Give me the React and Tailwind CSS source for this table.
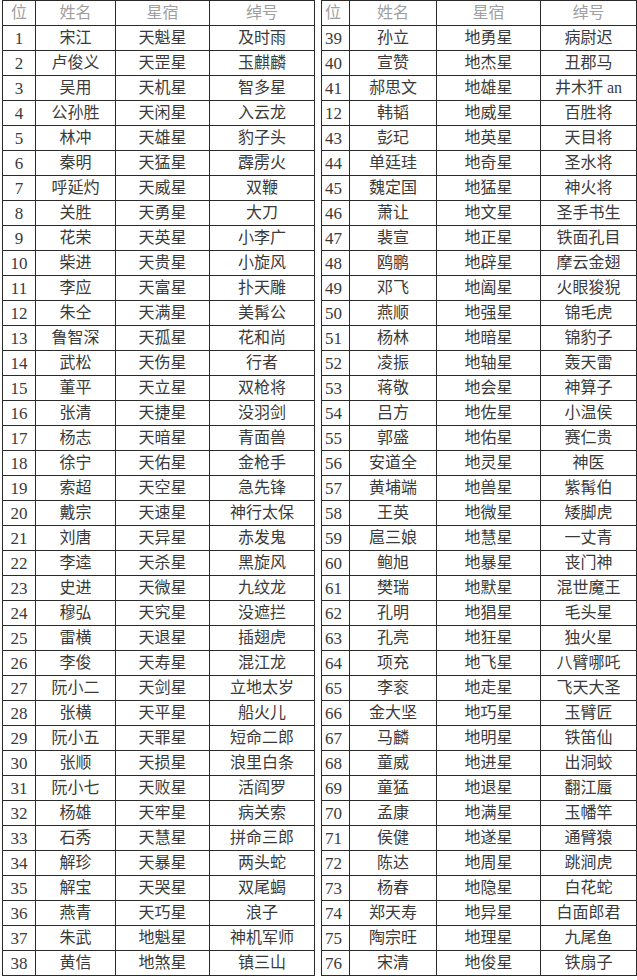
import React from 'react';

const left = [
  ['1', '宋江', '天魁星', '及时雨'],
  ['2', '卢俊义', '天罡星', '玉麒麟'],
  ['3', '吴用', '天机星', '智多星'],
  ['4', '公孙胜', '天闲星', '入云龙'],
  ['5', '林冲', '天雄星', '豹子头'],
  ['6', '秦明', '天猛星', '霹雳火'],
  ['7', '呼延灼', '天威星', '双鞭'],
  ['8', '关胜', '天勇星', '大刀'],
  ['9', '花荣', '天英星', '小李广'],
  ['10', '柴进', '天贵星', '小旋风'],
  ['11', '李应', '天富星', '扑天雕'],
  ['12', '朱仝', '天满星', '美髯公'],
  ['13', '鲁智深', '天孤星', '花和尚'],
  ['14', '武松', '天伤星', '行者'],
  ['15', '董平', '天立星', '双枪将'],
  ['16', '张清', '天捷星', '没羽剑'],
  ['17', '杨志', '天暗星', '青面兽'],
  ['18', '徐宁', '天佑星', '金枪手'],
  ['19', '索超', '天空星', '急先锋'],
  ['20', '戴宗', '天速星', '神行太保'],
  ['21', '刘唐', '天异星', '赤发鬼'],
  ['22', '李逵', '天杀星', '黑旋风'],
  ['23', '史进', '天微星', '九纹龙'],
  ['24', '穆弘', '天究星', '没遮拦'],
  ['25', '雷横', '天退星', '插翅虎'],
  ['26', '李俊', '天寿星', '混江龙'],
  ['27', '阮小二', '天剑星', '立地太岁'],
  ['28', '张横', '天平星', '船火儿'],
  ['29', '阮小五', '天罪星', '短命二郎'],
  ['30', '张顺', '天损星', '浪里白条'],
  ['31', '阮小七', '天败星', '活阎罗'],
  ['32', '杨雄', '天牢星', '病关索'],
  ['33', '石秀', '天慧星', '拼命三郎'],
  ['34', '解珍', '天暴星', '两头蛇'],
  ['35', '解宝', '天哭星', '双尾蝎'],
  ['36', '燕青', '天巧星', '浪子'],
  ['37', '朱武', '地魁星', '神机军师'],
  ['38', '黄信', '地煞星', '镇三山'],
];

const right = [
  ['39', '孙立', '地勇星', '病尉迟'],
  ['40', '宣赞', '地杰星', '丑郡马'],
  ['41', '郝思文', '地雄星', '井木犴 an'],
  ['12', '韩韬', '地威星', '百胜将'],
  ['43', '彭玘', '地英星', '天目将'],
  ['44', '单廷珪', '地奇星', '圣水将'],
  ['45', '魏定国', '地猛星', '神火将'],
  ['46', '萧让', '地文星', '圣手书生'],
  ['47', '裴宣', '地正星', '铁面孔目'],
  ['48', '鸥鹏', '地辟星', '摩云金翅'],
  ['49', '邓飞', '地阖星', '火眼狻猊'],
  ['50', '燕顺', '地强星', '锦毛虎'],
  ['51', '杨林', '地暗星', '锦豹子'],
  ['52', '凌振', '地轴星', '轰天雷'],
  ['53', '蒋敬', '地会星', '神算子'],
  ['54', '吕方', '地佐星', '小温侯'],
  ['55', '郭盛', '地佑星', '赛仁贵'],
  ['56', '安道全', '地灵星', '神医'],
  ['57', '黄埔端', '地兽星', '紫髯伯'],
  ['58', '王英', '地微星', '矮脚虎'],
  ['59', '扈三娘', '地慧星', '一丈青'],
  ['60', '鲍旭', '地暴星', '丧门神'],
  ['61', '樊瑞', '地默星', '混世魔王'],
  ['62', '孔明', '地猖星', '毛头星'],
  ['63', '孔亮', '地狂星', '独火星'],
  ['64', '项充', '地飞星', '八臂哪吒'],
  ['65', '李衮', '地走星', '飞天大圣'],
  ['66', '金大坚', '地巧星', '玉臂匠'],
  ['67', '马麟', '地明星', '铁笛仙'],
  ['68', '童威', '地进星', '出洞蛟'],
  ['69', '童猛', '地退星', '翻江蜃'],
  ['70', '孟康', '地满星', '玉幡竿'],
  ['71', '侯健', '地遂星', '通臂猿'],
  ['72', '陈达', '地周星', '跳涧虎'],
  ['73', '杨春', '地隐星', '白花蛇'],
  ['74', '郑天寿', '地异星', '白面郎君'],
  ['75', '陶宗旺', '地理星', '九尾鱼'],
  ['76', '宋清', '地俊星', '铁扇子'],
];

function HeroTable({ rows, widths, numClass }) {
  return (
    <table className="table-fixed border-collapse text-[16px] leading-none text-[#3a3a3a]">
      <colgroup>
        {widths.map((w, i) => (
          <col key={i} style={{ width: w }} />
        ))}
      </colgroup>
      <thead>
        <tr className="h-[25px] text-[#a0a0a0]">
          <th className={`border border-[#2a2a2a] p-0 font-normal ${numClass}`}>位</th>
          <th className="border border-[#2a2a2a] p-0 font-normal">姓名</th>
          <th className="border border-[#2a2a2a] p-0 font-normal">星宿</th>
          <th className="border border-[#2a2a2a] p-0 font-normal">绰号</th>
        </tr>
      </thead>
      <tbody>
        {rows.map((r, i) => (
          <tr key={i} className="h-[25px]">
            <td className={`border border-[#2a2a2a] p-0 text-[17px] ${numClass}`}>{r[0]}</td>
            <td className="border border-[#2a2a2a] p-0 text-center">{r[1]}</td>
            <td className="border border-[#2a2a2a] p-0 text-center">{r[2]}</td>
            <td className="border border-[#2a2a2a] p-0 text-center whitespace-nowrap">{r[3]}</td>
          </tr>
        ))}
      </tbody>
    </table>
  );
}

export default function App() {
  return (
    <div
      className="w-[637px] h-[980px] bg-white overflow-hidden pl-[2px]"
      style={{ fontFamily: '"Liberation Serif", "Noto Sans CJK SC", serif' }}
    >
      <div className="flex gap-[6px]">
        <HeroTable rows={left} widths={[33, 80, 94, 105]} numClass="text-center" />
        <HeroTable rows={right} widths={[28, 87, 104, 96]} numClass="text-left pl-[3px]" />
      </div>
    </div>
  );
}
